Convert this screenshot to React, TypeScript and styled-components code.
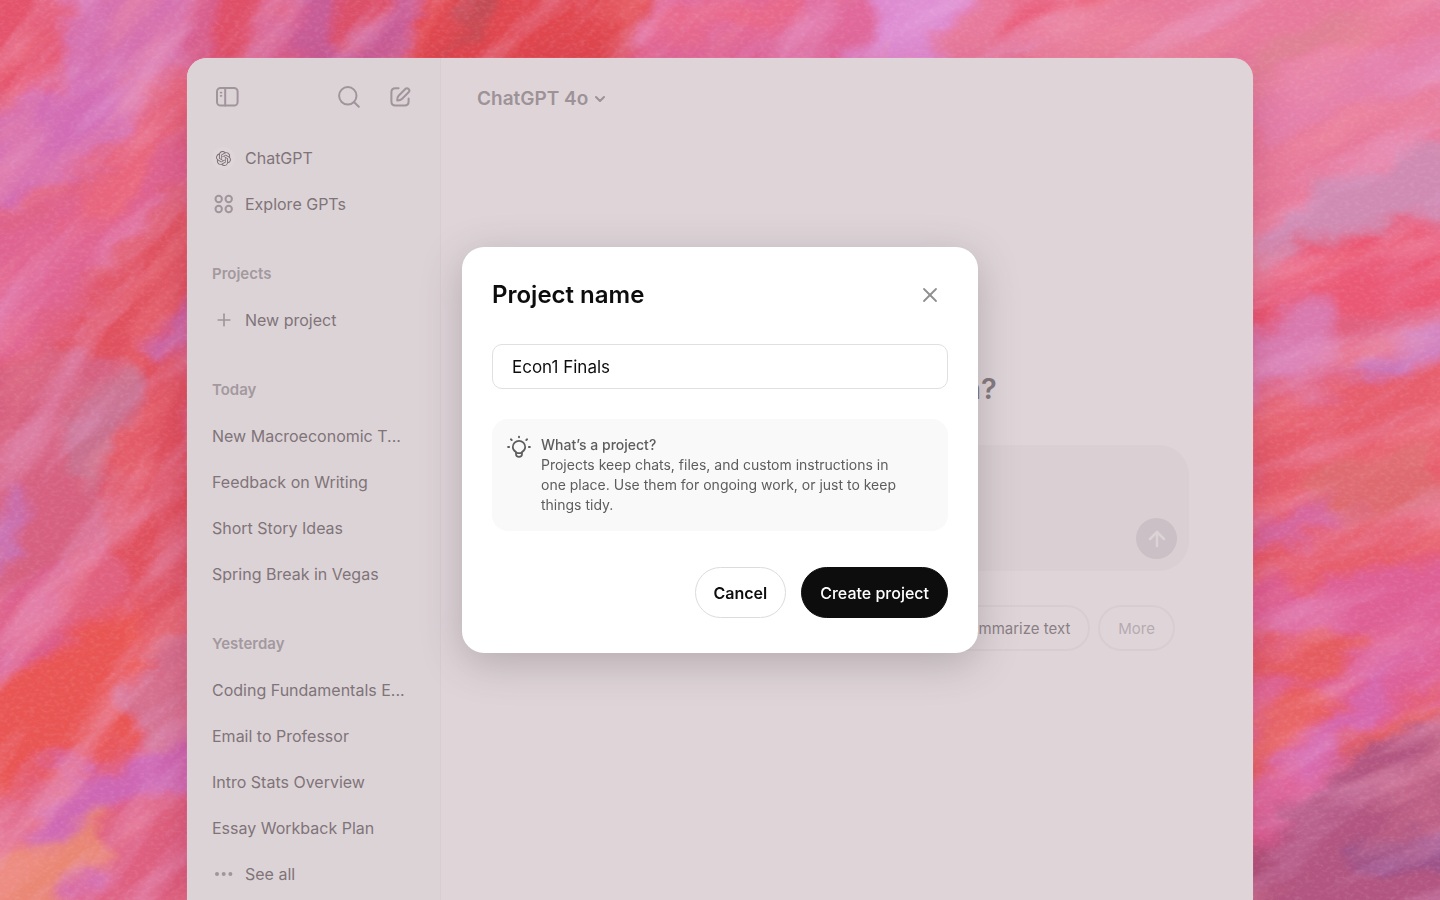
import React from "react";
import styled, { createGlobalStyle, css } from "styled-components";
import { ArrowUp, ChevronDown, Plus, X } from "lucide-react";
import { SiOpenai } from "react-icons/si";

const GlobalStyle = createGlobalStyle`
  *, *::before, *::after { box-sizing: border-box; }
  body {
    margin: 0;
    font-family: Inter, "Liberation Sans", sans-serif;
    color: #0d0d0d;
    -webkit-font-smoothing: antialiased;
  }
  h1, h2, h3, p, ul { margin: 0; padding: 0; }
  ul { list-style: none; }
  button, input { font: inherit; color: inherit; }
`;

const Page = styled.div`
  position: relative;
  min-height: 100vh;
  padding: 58px 32px 0;
  overflow: hidden;
  background: #e0607f;
`;

const Painting = styled.svg`
  position: absolute;
  inset: 0;
  width: 100%;
  height: 100%;
`;

const Window = styled.div`
  position: relative;
  display: flex;
  max-width: 1066px;
  height: calc(100vh - 58px);
  margin: 0 auto;
  overflow: hidden;
  background: #dfd5d9;
  border-radius: 20px 20px 0 0;
  box-shadow: 0 0 1px rgba(240, 200, 215, 0.6), 0 16px 40px rgba(140, 20, 50, 0.28);
`;

const Sidebar = styled.nav`
  flex: 0 0 254px;
  background: #dcd3d7;
  border-right: 1px solid #d8ced2;
  color: #807479;
`;

const SidebarTools = styled.div`
  display: flex;
  align-items: center;
  gap: 27px;
  height: 77px;
  padding: 1px 28px 0;
`;

const IconButton = styled.button<{ $push?: boolean }>`
  display: flex;
  padding: 0;
  border: 0;
  background: none;
  color: #a0959a;
  cursor: pointer;
  ${(p) => p.$push && css`margin-right: auto;`}
`;

const Section = styled.section`
  & + & { margin-top: 24px; }
`;

const SectionTitle = styled.h3`
  padding: 0 25px;
  font-size: 15px;
  font-weight: 600;
  line-height: 46px;
  color: #a3999e;
`;

const NavLink = styled.a`
  display: flex;
  align-items: center;
  gap: 10px;
  height: 46px;
  padding: 0 25px;
  font-size: 16px;
  line-height: 24px;
  color: inherit;
  text-decoration: none;
  white-space: nowrap;
`;

const NavIcon = styled.span<{ $halo?: boolean }>`
  display: flex;
  align-items: center;
  justify-content: center;
  width: 23px;
  height: 23px;
  border-radius: 50%;
  color: #a0959a;
  ${(p) => p.$halo && css`
    background: #dfd6da;
    color: #7b7075;
  `}
`;

const Main = styled.main`
  flex: 1;
  min-width: 0;
`;

const ModelBar = styled.header`
  display: flex;
  align-items: center;
  height: 82px;
  padding: 0 36px;
`;

const ModelButton = styled.button`
  display: flex;
  align-items: center;
  gap: 4px;
  padding: 0;
  border: 0;
  background: none;
  font-size: 19px;
  font-weight: 600;
  line-height: 24px;
  color: #9d9297;
`;

const Stage = styled.div`
  display: flex;
  flex-direction: column;
  max-width: 684px;
  margin: 0 auto;
  padding-top: 231px;
`;

const Greeting = styled.h1`
  font-size: 29px;
  font-weight: 600;
  line-height: 36px;
  text-align: center;
  color: #85797e;
`;

const Composer = styled.div`
  display: flex;
  align-items: flex-end;
  justify-content: flex-end;
  height: 126px;
  margin-top: 38px;
  padding: 12px;
  border-radius: 30px;
  background: #dad0d4;
`;

const SendButton = styled.button`
  display: flex;
  align-items: center;
  justify-content: center;
  width: 41px;
  height: 41px;
  padding: 0;
  border: 0;
  border-radius: 50%;
  background: #cbc0c5;
  color: #dcd3d7;
`;

const Chips = styled.div`
  display: flex;
  justify-content: flex-end;
  gap: 8px;
  margin-top: 34px;
  padding-right: 14px;
`;

const Chip = styled.button<{ $muted?: boolean }>`
  height: 46px;
  padding: 0 18px;
  border: 2px solid #d8ced2;
  border-radius: 23px;
  background: none;
  font-size: 15px;
  color: ${(p) => (p.$muted ? "#b5abb0" : "#8a7f84")};
`;

const Overlay = styled.div`
  position: fixed;
  inset: 0;
  display: flex;
  align-items: center;
  justify-content: center;
`;

const Dialog = styled.form`
  width: 516px;
  max-width: calc(100% - 32px);
  padding: 32px 30px 35px;
  border-radius: 22px;
  background: #fff;
  box-shadow: 0 10px 40px rgba(70, 60, 65, 0.28);
`;

const DialogHead = styled.div`
  display: flex;
  align-items: center;
  justify-content: space-between;
  padding-right: 6px;
  color: #0d0d0d;
`;

const DialogTitle = styled.h2`
  font-size: 24px;
  font-weight: 600;
  line-height: 32px;
`;

const CloseButton = styled(IconButton)`
  color: #8f8f8f;
`;

const NameInput = styled.input`
  display: block;
  width: 100%;
  height: 45px;
  margin-top: 33px;
  padding: 0 19px;
  border: 1px solid #e0e0e0;
  border-radius: 10px;
  background: #fff;
  font-size: 17px;
  outline: none;
`;

const Tip = styled.div`
  display: flex;
  gap: 9px;
  margin-top: 30px;
  padding: 16px 14px;
  border-radius: 16px;
  background: #f9f9f9;
  font-size: 14px;
  line-height: 20px;
  color: #5d5d5d;

  svg { flex: none; }
`;

const TipBody = styled.div`
  max-width: 376px;
`;

const TipTitle = styled.h3`
  font-size: 14px;
  font-weight: 500;
`;

const Actions = styled.div`
  display: flex;
  justify-content: flex-end;
  gap: 15px;
  margin-top: 36px;
`;

const ActionButton = styled.button<{ $primary?: boolean }>`
  height: 51px;
  padding: 0 18px;
  border: 1px solid ${(p) => (p.$primary ? "#0d0d0d" : "#dcdcdc")};
  border-radius: 26px;
  background: ${(p) => (p.$primary ? "#0d0d0d" : "#fff")};
  color: ${(p) => (p.$primary ? "#fff" : "#0d0d0d")};
  font-size: 16px;
  font-weight: ${(p) => (p.$primary ? 500 : 600)};
`;

const stroke = {
  fill: "none",
  stroke: "currentColor",
  strokeWidth: 2,
  strokeLinecap: "round" as const,
  strokeLinejoin: "round" as const,
};

const SidebarIcon = () => (
  <svg width="24" height="22" viewBox="0 0 24 22" {...stroke} aria-hidden="true">
    <rect x="2" y="2" width="20.6" height="17.6" rx="3.6" />
    <path d="M10.2 2v17.6" />
    <path d="M5.6 6.6h.9M5.6 9.8h.9" strokeWidth="1.7" />
  </svg>
);

const SearchIcon = () => (
  <svg width="24" height="24" viewBox="0 0 24 24" {...stroke} aria-hidden="true">
    <circle cx="10.8" cy="10.8" r="8.7" />
    <path d="m17.2 17.2 4.6 4.6" />
  </svg>
);

const ComposeIcon = () => (
  <svg width="24" height="24" viewBox="0 0 24 24" {...stroke} aria-hidden="true">
    <path d="M10.6 3.2H7.4c-2.800 0-4 1.200-4 4v9.400c0 2.800 1.200 4 4 4h9.200c2.800 0 4-1.200 4-4v-3.200" />
    <path d="M9.200 15.400c-.2-2.400.3-3.600 1.400-4.700l6.700-6.700a2.300 2.300 0 0 1 3.300 3.300L13.900 14c-1.100 1.100-2.300 1.600-4.700 1.400Z" />
  </svg>
);

const GridIcon = () => (
  <svg width="20" height="20" viewBox="0 0 20 20" {...stroke} aria-hidden="true">
    <circle cx="4.700" cy="5" r="3.200" />
    <circle cx="14.700" cy="5" r="3.200" />
    <circle cx="4.700" cy="15" r="3.200" />
    <circle cx="14.700" cy="15" r="3.200" />
  </svg>
);

const DotsIcon = () => (
  <svg width="20" height="6" viewBox="0 0 20 6" fill="currentColor" aria-hidden="true">
    <circle cx="3" cy="3" r="2" />
    <circle cx="9.700" cy="3" r="2" />
    <circle cx="16.400" cy="3" r="2" />
  </svg>
);

const BulbIcon = () => (
  <svg width="26" height="26" viewBox="0 0 26 26" {...stroke} strokeWidth={1.7} aria-hidden="true">
    <path d="M10 17c-1.900-1-3.200-2.700-3.200-5a6.200 6.200 0 0 1 12.400 0c0 2.300-1.300 4-3.200 5v2.200c0 1.500-1 2.600-3 2.600s-3-1.100-3-2.600Z" />
    <path d="M10.200 17.600c1.600.7 4 .7 5.600 0" />
    <path d="M13 1.600v.6M4.900 4.300l.8.700M21.100 4.300l-.8.700M2.100 12h1M22.900 12h1" strokeWidth="1.900" />
  </svg>
);

const Backdrop = () => (
  <Painting viewBox="0 0 1440 900" preserveAspectRatio="xMidYMid slice" aria-hidden="true">
    <defs>
      <filter id="paint" x="-5%" y="-5%" width="110%" height="110%">
        <feGaussianBlur stdDeviation="7" result="soft" />
        <feTurbulence type="fractalNoise" baseFrequency="0.014 0.022" numOctaves="4" seed="4" />
        <feDisplacementMap in="soft" scale="60" xChannelSelector="R" yChannelSelector="G" />
        <feGaussianBlur stdDeviation="1.500" />
      </filter>
      <filter id="streakLilac" x="0" y="0" width="100%" height="100%">
        <feTurbulence type="fractalNoise" baseFrequency="0.006 0.022" numOctaves="6" seed="11" />
        <feColorMatrix values="0 0 0 0 .82  0 0 0 0 .46  0 0 0 0 .78  3.500 0 0 0 -1.700" />
      </filter>
      <filter id="streakRed" x="0" y="0" width="100%" height="100%">
        <feTurbulence type="fractalNoise" baseFrequency="0.006 0.020" numOctaves="6" seed="29" />
        <feColorMatrix values="0 0 0 0 .92  0 0 0 0 .32  0 0 0 0 .36  0 3.500 0 0 -1.700" />
      </filter>
      <filter id="grain" x="0" y="0" width="100%" height="100%">
        <feTurbulence type="fractalNoise" baseFrequency="0.2 0.3" numOctaves="3" seed="7" />
        <feColorMatrix values="0 0 0 0 .95  0 0 0 0 .75  0 0 0 0 .85  2 0 0 0 -.9" />
      </filter>
      <clipPath id="leftSide"><path d="M0 0H900L700 900H0Z" /></clipPath>
      <clipPath id="rightSide"><path d="M900 0H1440V900H700Z" /></clipPath>
    </defs>
    <g filter="url(#paint)">
      <rect x="-60" y="-60" width="1560" height="1020" fill="#e0607f" />
      <path d="M-40-40H80L60 60 0 90-40 70Z" fill="#e4536c" />
      <path d="M70-40H300L190 60 120 110 60 80Z" fill="#d56fae" />
      <path d="M0 95 50 60 60 120 10 130Z" fill="#e8596f" />
      <path d="M-40 150 40 100 110 70 140 110 60 190-40 230Z" fill="#d26cb4" />
      <path d="M-40 240 60 210 150 130 190 90V170L110 270 30 330-40 390Z" fill="#df6491" />
      <path d="M60 230 130 120 190 70V130L120 210Z" fill="#e8657d" />
      <path d="M70 340 120 250 200 180V700L130 640Z" fill="#e0515f" />
      <path d="M150 340 230 270V310L160 355Z" fill="#ca65a6" />
      <path d="M-40 410 60 330 130 380 110 520 40 590-40 600Z" fill="#d6617f" />
      <path d="M60 420 130 370 145 390 100 500 70 480Z" fill="#c9708f" />
      <path d="M-20 560 20 490 30 500 0 580Z" fill="#c670b4" />
      <path d="M-40 620 60 570 80 620 0 680-40 690Z" fill="#da5a8a" />
      <path d="M-40 710 60 640 140 600 150 720 90 760 0 800-40 830Z" fill="#e95552" />
      <path d="M135 665 200 620V760L140 740Z" fill="#d56f8f" />
      <path d="M25 815 90 765 200 730V790L130 800 40 850Z" fill="#ce66b3" />
      <path d="M-40 870 40 845 100 810 105 850 40 930-40 940Z" fill="#e98672" />
      <path d="M70 930 110 850 220 790V940Z" fill="#de5f80" />
      <path d="M70 895 95 865 110 880 90 910Z" fill="#d367ab" />
      <path d="M180-40H340L290 70H180Z" fill="#d8608f" />
      <path d="M230-40 300-40 250 60 210 70Z" fill="#df5068" />
      <path d="M300-40H440L400 80H290Z" fill="#c85c96" />
      <path d="M350-40H400L350 60H330Z" fill="#dc4f68" />
      <path d="M430-40H690L610 80H400Z" fill="#e0464f" />
      <path d="M470-40H520L450 60Z" fill="#c24c55" />
      <path d="M680-40H900L850 90H610Z" fill="#e0689a" />
      <path d="M660 10 820-20 790 20 640 50Z" fill="#e8688a" />
      <path d="M890-40H1000L900 90H850Z" fill="#de8cd2" />
      <path d="M980-40H1500V200L1240 240 1200 70H920Z" fill="#e77a9c" />
      <path d="M1010 10 1160-30 1140 0 1000 50Z" fill="#e9617e" />
      <path d="M1250 40 1380 10 1360 45 1240 90Z" fill="#e08094" />
      <path d="M1250 90 1500 10V60L1260 150Z" fill="#e580ab" />
      <path d="M1240 250 1330 180 1500 120V210L1320 240Z" fill="#d08bb2" />
      <path d="M1240 270 1340 240 1500 205V300L1240 330Z" fill="#ea5974" />
      <path d="M1240 320 1330 310 1335 370 1240 410Z" fill="#d979ae" />
      <path d="M1330 380 1380 350 1500 310V345L1390 370Z" fill="#c977bb" />
      <path d="M1240 420 1380 375 1500 350V560L1240 600Z" fill="#e65d6c" />
      <path d="M1300 480 1420 440 1450 500 1350 530Z" fill="#de6a70" />
      <path d="M1240 530 1340 500 1360 515 1240 560Z" fill="#d668a0" />
      <path d="M1240 590 1500 550V680L1240 850Z" fill="#de5e94" />
      <path d="M1240 650 1310 625 1380 640 1350 670 1240 680Z" fill="#e55c60" />
      <path d="M1260 720 1310 675 1335 700 1300 740 1250 800Z" fill="#e75b5c" />
      <path d="M1280 760 1340 700 1420 660 1360 740 1300 780Z" fill="#d666ab" />
      <path d="M1330 750 1500 650V690L1350 760Z" fill="#e65f5e" />
      <path d="M1240 850 1340 760 1500 680V960H1240Z" fill="#b25580" />
      <path d="M1350 850 1500 820V880L1340 870Z" fill="#9e5288" />
    </g>
    <g clipPath="url(#leftSide)">
      <g transform="rotate(-46 720 450)">
        <rect x="-300" y="-500" width="2040" height="1900" filter="url(#streakLilac)" opacity="0.34" />
        <rect x="-300" y="-500" width="2040" height="1900" filter="url(#streakRed)" opacity="0.34" />
      </g>
    </g>
    <g clipPath="url(#rightSide)">
      <g transform="rotate(-24 720 450)">
        <rect x="-300" y="-500" width="2040" height="1900" filter="url(#streakLilac)" opacity="0.3" />
        <rect x="-300" y="-500" width="2040" height="1900" filter="url(#streakRed)" opacity="0.3" />
      </g>
    </g>
    <rect width="1440" height="900" filter="url(#grain)" opacity="0.14" />
  </Painting>
);

const groups = [
  {
    title: "Today",
    chats: ["New Macroeconomic T...", "Feedback on Writing", "Short Story Ideas", "Spring Break in Vegas"],
  },
  {
    title: "Yesterday",
    chats: ["Coding Fundamentals E...", "Email to Professor", "Intro Stats Overview", "Essay Workback Plan"],
  },
];

export default function App() {
  return (
    <Page>
      <GlobalStyle />
      <Backdrop />
      <Window>
        <Sidebar>
          <SidebarTools>
            <IconButton $push aria-label="Toggle sidebar"><SidebarIcon /></IconButton>
            <IconButton aria-label="Search"><SearchIcon /></IconButton>
            <IconButton aria-label="New chat"><ComposeIcon /></IconButton>
          </SidebarTools>
          <Section>
            <NavLink href="#chatgpt"><NavIcon $halo><SiOpenai size={15} /></NavIcon>ChatGPT</NavLink>
            <NavLink href="#explore"><NavIcon><GridIcon /></NavIcon>Explore GPTs</NavLink>
          </Section>
          <Section>
            <SectionTitle>Projects</SectionTitle>
            <NavLink href="#new-project"><NavIcon><Plus size={20} strokeWidth={2} /></NavIcon>New project</NavLink>
          </Section>
          {groups.map((group) => (
            <Section key={group.title}>
              <SectionTitle>{group.title}</SectionTitle>
              {group.chats.map((chat) => (
                <NavLink key={chat} href="#chat">{chat}</NavLink>
              ))}
              {group.title === "Yesterday" && (
                <NavLink href="#all"><NavIcon><DotsIcon /></NavIcon>See all</NavLink>
              )}
            </Section>
          ))}
        </Sidebar>
        <Main>
          <ModelBar>
            <ModelButton>ChatGPT 4o<ChevronDown size={16} strokeWidth={3} /></ModelButton>
          </ModelBar>
          <Stage>
            <Greeting>What can I help with?</Greeting>
            <Composer>
              <SendButton aria-label="Send"><ArrowUp size={24} strokeWidth={2.5} /></SendButton>
            </Composer>
            <Chips>
              <Chip>Summarize text</Chip>
              <Chip $muted>More</Chip>
            </Chips>
          </Stage>
        </Main>
      </Window>
      <Overlay>
        <Dialog role="dialog" aria-labelledby="project-title" onSubmit={(e) => e.preventDefault()}>
          <DialogHead>
            <DialogTitle id="project-title"><label htmlFor="project-name">Project name</label></DialogTitle>
            <CloseButton type="button" aria-label="Close"><X size={24} strokeWidth={1.8} /></CloseButton>
          </DialogHead>
          <NameInput id="project-name" type="text" defaultValue="Econ1 Finals" />
          <Tip>
            <BulbIcon />
            <TipBody>
              <TipTitle>What’s a project?</TipTitle>
              <p>Projects keep chats, files, and custom instructions in one place. Use them for ongoing work, or just to keep things tidy.</p>
            </TipBody>
          </Tip>
          <Actions>
            <ActionButton type="button">Cancel</ActionButton>
            <ActionButton type="submit" $primary>Create project</ActionButton>
          </Actions>
        </Dialog>
      </Overlay>
    </Page>
  );
}
